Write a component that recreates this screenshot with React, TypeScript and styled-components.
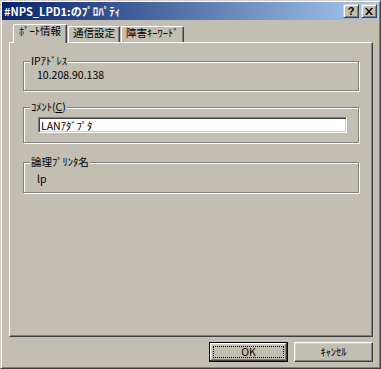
import styled, { createGlobalStyle, css } from 'styled-components';

const face = '#c2beb2';
const shadow = '#808080';
const darkShadow = '#404040';
const highlight = '#ffffff';

const GlobalStyle = createGlobalStyle`
    html, body {
        margin: 0;
        padding: 0;
        background: ${face};
    }
    body {
        font-family: "Noto Sans CJK JP", "Liberation Sans", sans-serif;
        font-size: 10.5px;
        color: #000;
    }
`;

const Window = styled.div`
    width: 381px;
    height: 369px;
    box-sizing: border-box;
    display: flex;
    flex-direction: column;
    padding: 1px;
    background: ${face};
    border: 1px solid;
    border-color: #d4d0c8 ${darkShadow} ${darkShadow} #d4d0c8;
    box-shadow: inset 1px 1px 0 ${highlight}, inset -1px -1px 0 ${shadow};
`;

const TitleBar = styled.div`
    height: 18px;
    display: flex;
    align-items: center;
    justify-content: space-between;
    background: linear-gradient(to right, #0a246a, #a6caf0);
    padding: 0 2px;
`;

const Title = styled.span`
    color: #fff;
    font-weight: bold;
    font-size: 11px;
    line-height: 18px;
    white-space: nowrap;
`;

const CaptionButtons = styled.div`
    display: flex;
    gap: 2px;
`;

const CaptionButton = styled.div`
    width: 16px;
    height: 14px;
    box-sizing: border-box;
    display: flex;
    align-items: center;
    justify-content: center;
    background: ${face};
    border: 1px solid;
    border-color: #d4d0c8 ${darkShadow} ${darkShadow} #d4d0c8;
    box-shadow: inset 1px 1px 0 ${highlight}, inset -1px -1px 0 ${shadow};
    font-family: "Liberation Sans", sans-serif;
    font-weight: bold;
    font-size: 11px;
    line-height: 12px;
`;

const Body = styled.div`
    flex: 1;
    display: flex;
    flex-direction: column;
    padding: 4px 6px 5px 7px;
`;

const TabStrip = styled.div`
    height: 18px;
    display: flex;
    align-items: flex-end;
    gap: 1px;
    padding-left: 4px;
`;

const Tab = styled.div<{ $active?: boolean }>`
    position: relative;
    box-sizing: border-box;
    height: 16px;
    padding: 0 4px;
    line-height: 12px;
    white-space: nowrap;
    background: ${face};
    border: 1px solid;
    border-bottom: none;
    border-color: ${highlight} ${darkShadow} transparent ${highlight};
    border-radius: 2px 2px 0 0;
    box-shadow: inset -1px 0 0 ${shadow};

    ${(p) =>
        p.$active &&
        css`
            height: 19px;
            padding: 0 5px;
            margin-bottom: -1px;
            z-index: 1;
        `}
`;

const TabPanel = styled.div`
    flex: 1;
    display: flex;
    flex-direction: column;
    padding: 12px 13px 0 13px;
    border: 1px solid;
    border-color: ${highlight} ${darkShadow} ${darkShadow} ${highlight};
    box-shadow: inset -1px -1px 0 ${shadow};
`;

const Group = styled.fieldset<{ $gap?: number }>`
    margin: ${(p) => p.$gap ?? 0}px 0 0 0;
    padding: 0 6px;
    min-width: 0;
    border: 1px solid ${shadow};
    box-shadow: 1px 1px 0 ${highlight}, inset 1px 1px 0 ${highlight};
`;

const Legend = styled.legend`
    padding: 0 1px;
    line-height: 12px;
    background: ${face};
`;

const Value = styled.div<{ $top?: number; $bottom?: number }>`
    margin: ${(p) => p.$top ?? 0}px 0 ${(p) => p.$bottom ?? 0}px 7px;
    line-height: 12px;
`;

const TextBox = styled.input`
    display: block;
    box-sizing: border-box;
    width: calc(100% - 13px);
    height: 16px;
    margin: 4px 5px 9px 8px;
    padding: 0 2px;
    font: inherit;
    line-height: 12px;
    color: #000;
    background: #fff;
    border: 1px solid;
    border-color: ${shadow} ${highlight} ${highlight} ${shadow};
    box-shadow: inset 1px 1px 0 ${darkShadow}, inset -1px -1px 0 #d4d0c8;
    outline: none;
`;

const ButtonRow = styled.div`
    display: flex;
    justify-content: flex-end;
    gap: 6px;
    margin-top: 5px;
`;

const DialogButton = styled.button<{ $default?: boolean }>`
    width: 79px;
    height: 20px;
    box-sizing: border-box;
    padding: 0;
    font: inherit;
    line-height: 12px;
    color: #000;
    background: ${face};
    border: 1px solid;
    border-color: ${highlight} ${darkShadow} ${darkShadow} ${highlight};
    box-shadow: inset -1px -1px 0 ${shadow}, inset 1px 1px 0 #d4d0c8;

    ${(p) =>
        p.$default &&
        css`
            border-color: #000;
            box-shadow: inset -1px -1px 0 ${darkShadow}, inset 1px 1px 0 ${highlight},
                inset -2px -2px 0 ${shadow}, inset 2px 2px 0 #d4d0c8;
            outline: 1px dotted #000;
            outline-offset: -5px;
        `}
`;

const Underline = styled.span`
    text-decoration: underline;
`;

function CloseGlyph() {
    return (
        <svg width="8" height="7" viewBox="0 0 8 7">
            <path d="M0 0h2l2 2.4L6 0h2L5 3.5 8 7H6L4 4.6 2 7H0l3-3.5z" fill="#000" />
        </svg>
    );
}

const tabs = ['ﾎﾟｰﾄ情報', '通信設定', '障害ｷｰﾜｰﾄﾞ'];

export default function App() {
    return (
        <>
            <GlobalStyle />
            <Window>
                <TitleBar>
                    <Title>#NPS_LPD1:のﾌﾟﾛﾊﾟﾃｨ</Title>
                    <CaptionButtons>
                        <CaptionButton>?</CaptionButton>
                        <CaptionButton>
                            <CloseGlyph />
                        </CaptionButton>
                    </CaptionButtons>
                </TitleBar>

                <Body>
                    <TabStrip>
                        {tabs.map((label, i) => (
                            <Tab key={label} $active={i === 0}>
                                {label}
                            </Tab>
                        ))}
                    </TabStrip>

                    <TabPanel>
                        <Group>
                            <Legend>IPｱﾄﾞﾚｽ</Legend>
                            <Value $top={2} $bottom={9}>
                                10.208.90.138
                            </Value>
                        </Group>

                        <Group $gap={10}>
                            <Legend>
                                ｺﾒﾝﾄ(<Underline>C</Underline>)
                            </Legend>
                            <TextBox defaultValue="LANｱﾀﾞﾌﾟﾀ" />
                        </Group>

                        <Group $gap={13}>
                            <Legend>論理ﾌﾟﾘﾝﾀ名</Legend>
                            <Value $top={5} $bottom={7}>
                                lp
                            </Value>
                        </Group>
                    </TabPanel>

                    <ButtonRow>
                        <DialogButton $default>OK</DialogButton>
                        <DialogButton>ｷｬﾝｾﾙ</DialogButton>
                    </ButtonRow>
                </Body>
            </Window>
        </>
    );
}
